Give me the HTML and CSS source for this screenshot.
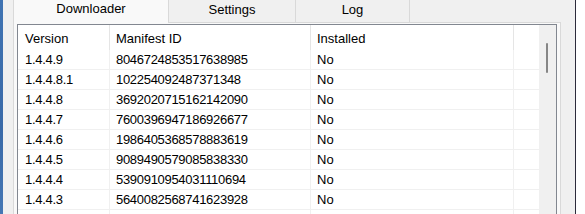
FILE: index.html
```html
<!DOCTYPE html>
<html>
<head>
<meta charset="utf-8">
<link rel="stylesheet" href="styles.css">
</head>
<body>
<div class="screen">
  <div class="desktop"></div>
  <div class="window">
    <div class="tabctl">
      <div class="tabs">
        <div class="tab selected">Downloader</div>
        <div class="tab settings">Settings</div>
        <div class="tab log">Log</div>
      </div>
      <div class="page">
        <div class="listview">
          <div class="table">
            <div class="hrow">
              <div class="hcell c1">Version</div>
              <div class="hcell c2">Manifest ID</div>
              <div class="hcell c3">Installed</div>
              <div class="hcell c4"></div>
            </div>
            <div class="row"><div class="cell c1 num">1.4.4.9</div><div class="cell c2 num">8046724853517638985</div><div class="cell c3">No</div><div class="cell c4"></div></div>
            <div class="row"><div class="cell c1 num">1.4.4.8.1</div><div class="cell c2 num">102254092487371348</div><div class="cell c3">No</div><div class="cell c4"></div></div>
            <div class="row"><div class="cell c1 num">1.4.4.8</div><div class="cell c2 num">3692020715162142090</div><div class="cell c3">No</div><div class="cell c4"></div></div>
            <div class="row"><div class="cell c1 num">1.4.4.7</div><div class="cell c2 num">7600396947186926677</div><div class="cell c3">No</div><div class="cell c4"></div></div>
            <div class="row"><div class="cell c1 num">1.4.4.6</div><div class="cell c2 num">1986405368578883619</div><div class="cell c3">No</div><div class="cell c4"></div></div>
            <div class="row"><div class="cell c1 num">1.4.4.5</div><div class="cell c2 num">9089490579085838330</div><div class="cell c3">No</div><div class="cell c4"></div></div>
            <div class="row"><div class="cell c1 num">1.4.4.4</div><div class="cell c2 num">5390910954031110694</div><div class="cell c3">No</div><div class="cell c4"></div></div>
            <div class="row"><div class="cell c1 num">1.4.4.3</div><div class="cell c2 num">5640082568741623928</div><div class="cell c3">No</div><div class="cell c4"></div></div>
            <div class="row"><div class="cell c1"></div><div class="cell c2"></div><div class="cell c3"></div><div class="cell c4"></div></div>
          </div>
          <div class="vscroll"><div class="thumb"></div></div>
        </div>
      </div>
    </div>
  </div>
  <div class="outside"></div>
</div>
</body>
</html>
```

FILE: styles.css
```css
html, body {
  margin: 0;
  padding: 0;
  background: #ffffff;
}
body {
  font-family: "Liberation Sans", Arial, sans-serif;
  font-size: 13px;
  line-height: 15px;
  color: #000;
}
.screen {
  display: flex;
  width: 585px;
  height: 214px;
  overflow: hidden;
}
.desktop {
  width: 3px;
  flex: none;
  background: linear-gradient(180deg, #3f73b2, #3a6aa8 60%, #4577b4);
}
.window {
  box-sizing: border-box;
  width: 573px;
  flex: none;
  background: #f0f0f0;
  border-right: 1px solid #2c2b3b;
  padding-left: 10px;
}
.outside {
  flex: 1;
  background: #ffffff;
}
.tabctl {
  width: 548px;
  display: flex;
  flex-direction: column;
  height: 100%;
}
.tabs {
  display: flex;
  align-items: flex-end;
  height: 22px;
  flex: none;
  position: relative;
  z-index: 2;
}
.tab {
  box-sizing: border-box;
  height: 23px;
  border: 1px solid #d9d9d9;
  border-top: none;
  border-bottom: none;
  background: #f0f0f0;
  text-align: center;
  padding-top: 3px;
}
.tab.selected {
  width: 156px;
  height: 25px;
  margin-bottom: -1px;
  background: #f9f9f9;
  position: relative;
  z-index: 2;
  padding-top: 3px;
}
.tab.settings {
  width: 128px;
  margin-left: -1px;
}
.tab.log {
  width: 115px;
  margin-left: -1px;
}
.page {
  box-sizing: border-box;
  flex: 1;
  border: 1px solid #d9d9d9;
  border-bottom: none;
  background: #f9f9f9;
  padding: 1px 3px 0 3px;
  position: relative;
  z-index: 1;
}
.listview {
  box-sizing: border-box;
  height: 100%;
  border: 1px solid #828790;
  border-bottom: none;
  background: #ffffff;
  display: flex;
}
.table {
  width: 521px;
  flex: none;
}
.hrow, .row {
  display: grid;
  grid-template-columns: 92px 201px 203px 25px;
}
.hcell {
  box-sizing: border-box;
  height: 25px;
  padding: 6px 0 0 7px;
  white-space: nowrap;
}
.hcell.c1, .hcell.c2, .hcell.c3 {
  border-right: 1px solid #e5e5e5;
}
.hcell.c2, .hcell.c3 {
  padding-left: 6px;
}
.cell {
  box-sizing: border-box;
  height: 20px;
  padding: 2px 0 0 7px;
  border-bottom: 1px solid #f0f0f0;
  white-space: nowrap;
}
.cell.c1, .cell.c2, .cell.c3 {
  border-right: 1px solid #f0f0f0;
}
.cell.c2, .cell.c3 {
  padding-left: 6px;
}
.num {
  letter-spacing: -0.3px;
}
.vscroll {
  box-sizing: border-box;
  width: 17px;
  flex: none;
  background: #f0f0f0;
  padding: 18px 0 0 7px;
}
.thumb {
  width: 2px;
  height: 30px;
  background: #868686;
  border-radius: 1px;
}
```
